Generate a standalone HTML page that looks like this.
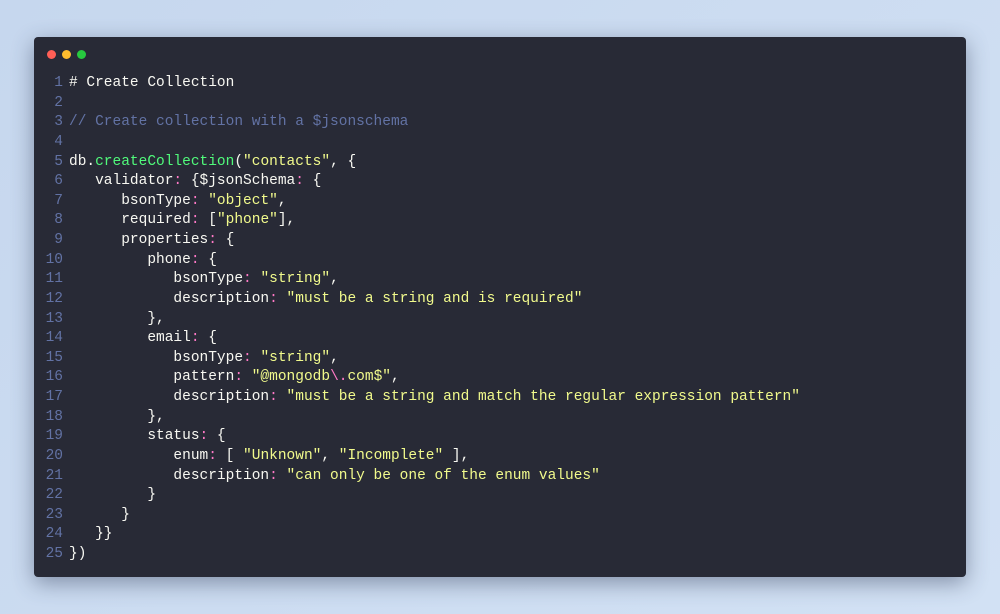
<!DOCTYPE html>
<html><head><style>
html,body{margin:0;padding:0;width:1000px;height:614px;overflow:hidden}
body{background:linear-gradient(135deg,#c6d7ee,#d2e1f4);position:relative}
.win{position:absolute;left:34px;top:37px;width:932px;height:540px;background:#282a36;border-radius:4px;box-shadow:0 6px 22px rgba(40,50,80,.45)}
.dot{position:absolute;top:13px;width:9px;height:9px;border-radius:50%}
pre{position:absolute;left:0;top:37px;margin:0;font-family:"Liberation Mono",monospace;font-size:14.5px;line-height:19.63px;color:#f8f8f2}
.n{display:inline-block;width:29px;text-align:right;color:#6272a4;margin-right:6px}
.c{color:#6272a4}.f{color:#50fa7b}.s{color:#f1fa8c}.p{color:#ff79c6}
</style></head><body>
<div class="win">
<div class="dot" style="left:13px;background:#ff5f56"></div>
<div class="dot" style="left:28px;background:#ffbd2e"></div>
<div class="dot" style="left:43px;background:#27c93f"></div>
<pre><span class="n">1</span># Create Collection
<span class="n">2</span>
<span class="n">3</span><span class="c">// Create collection with a $jsonschema</span>
<span class="n">4</span>
<span class="n">5</span>db.<span class="f">createCollection</span>(<span class="s">"contacts"</span>, {
<span class="n">6</span>   validator<span class="p">:</span> {$jsonSchema<span class="p">:</span> {
<span class="n">7</span>      bsonType<span class="p">:</span> <span class="s">"object"</span>,
<span class="n">8</span>      required<span class="p">:</span> [<span class="s">"phone"</span>],
<span class="n">9</span>      properties<span class="p">:</span> {
<span class="n">10</span>         phone<span class="p">:</span> {
<span class="n">11</span>            bsonType<span class="p">:</span> <span class="s">"string"</span>,
<span class="n">12</span>            description<span class="p">:</span> <span class="s">"must be a string and is required"</span>
<span class="n">13</span>         },
<span class="n">14</span>         email<span class="p">:</span> {
<span class="n">15</span>            bsonType<span class="p">:</span> <span class="s">"string"</span>,
<span class="n">16</span>            pattern<span class="p">:</span> <span class="s">"@mongodb<span class="p">\.</span>com$"</span>,
<span class="n">17</span>            description<span class="p">:</span> <span class="s">"must be a string and match the regular expression pattern"</span>
<span class="n">18</span>         },
<span class="n">19</span>         status<span class="p">:</span> {
<span class="n">20</span>            enum<span class="p">:</span> [ <span class="s">"Unknown"</span>, <span class="s">"Incomplete"</span> ],
<span class="n">21</span>            description<span class="p">:</span> <span class="s">"can only be one of the enum values"</span>
<span class="n">22</span>         }
<span class="n">23</span>      }
<span class="n">24</span>   }}
<span class="n">25</span>})</pre>
</div>
</body></html>
